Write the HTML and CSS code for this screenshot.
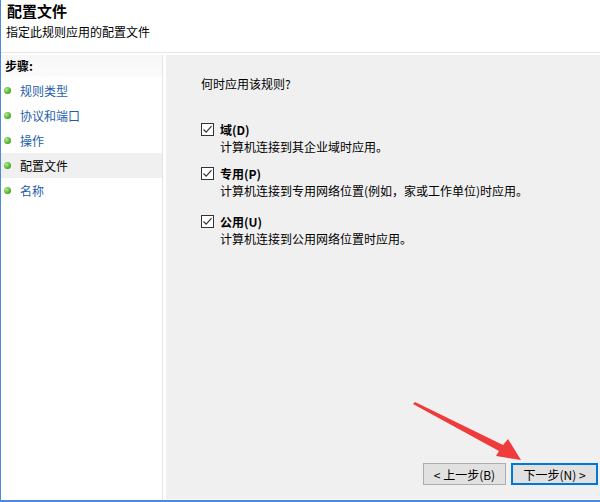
FILE: index.html
```html
<!DOCTYPE html>
<html lang="zh-CN">
<head>
  <meta charset="UTF-8" />
  <title>配置文件</title>
  <link rel="stylesheet" href="styles.css">
</head>
<body>
  <div class="window">
    <div class="header">
      <h1>配置文件</h1>
      <div class="subtitle">指定此规则应用的配置文件</div>
    </div>

    <div class="main">
      <div class="steps">
        <div class="steps-title">步骤:</div>
        <ul class="step-list">
          <li><span class="dot"></span><a>规则类型</a></li>
          <li><span class="dot"></span><a>协议和端口</a></li>
          <li><span class="dot"></span><a>操作</a></li>
          <li class="current"><span class="dot"></span><a>配置文件</a></li>
          <li><span class="dot"></span><a>名称</a></li>
        </ul>
      </div>

      <div class="content">
        <p class="question">何时应用该规则?</p>

        <div class="options">
          <div class="option">
            <span class="check"><svg width="13" height="13" viewBox="0 0 13 13"><rect x="0.5" y="0.5" width="12" height="12" fill="#fff" stroke="#333"/><path d="M2.5 6.5 L5.2 9.2 L10.5 3.2" fill="none" stroke="#333" stroke-width="1.2"/></svg></span>
            <div>
              <div class="opt-label">域(D)</div>
              <div class="opt-desc">计算机连接到其企业域时应用。</div>
            </div>
          </div>
          <div class="option">
            <span class="check"><svg width="13" height="13" viewBox="0 0 13 13"><rect x="0.5" y="0.5" width="12" height="12" fill="#fff" stroke="#333"/><path d="M2.5 6.5 L5.2 9.2 L10.5 3.2" fill="none" stroke="#333" stroke-width="1.2"/></svg></span>
            <div>
              <div class="opt-label">专用(P)</div>
              <div class="opt-desc">计算机连接到专用网络位置(例如，家或工作单位)时应用。</div>
            </div>
          </div>
          <div class="option option-last">
            <span class="check"><svg width="13" height="13" viewBox="0 0 13 13"><rect x="0.5" y="0.5" width="12" height="12" fill="#fff" stroke="#333"/><path d="M2.5 6.5 L5.2 9.2 L10.5 3.2" fill="none" stroke="#333" stroke-width="1.2"/></svg></span>
            <div>
              <div class="opt-label">公用(U)</div>
              <div class="opt-desc">计算机连接到公用网络位置时应用。</div>
            </div>
          </div>
        </div>

        <div class="buttons">
          <button class="btn">&lt; 上一步(B)</button>
          <button class="btn btn-default">下一步(N) &gt;</button>
        </div>
      </div>
    </div>

    <!-- red annotation arrow -->
    <svg class="arrow" width="600" height="502" viewBox="0 0 600 502">
      <polygon points="413,404 415,402 503,445 508,439 521,460 496,456 499,451" fill="#ef3b3b"/>
    </svg>
  </div>
</body>
</html>
```

FILE: styles.css
```css
* {
  margin: 0;
  padding: 0;
  box-sizing: border-box;
}

body {
  width: 600px;
  height: 502px;
  overflow: hidden;
  background: #fff;
  font-family: "Noto Sans CJK SC", "Liberation Sans", sans-serif;
  font-size: 12px;
  color: #000;
}

.window {
  position: relative;
  width: 600px;
  height: 502px;
  border-left: 1px solid #4d8ad9;
  border-bottom: 2px solid #4d8ad9;
  display: flex;
  flex-direction: column;
}

/* header */
.header {
  height: 53px;
  padding: 1px 0 0 5px;
  border-bottom: 1px solid #e6e6e6;
}

.header h1 {
  font-size: 15px;
  font-weight: bold;
  line-height: 20px;
  padding-left: 1px;
}

.subtitle {
  font-size: 12px;
  line-height: 16px;
  margin-top: 3px;
}

/* main area */
.main {
  flex: 1;
  display: flex;
  padding-top: 2px;
}

.steps {
  width: 162px;
  border-right: 1px solid #e4e4e4;
  margin-right: 3px;
}

.steps-title {
  height: 22px;
  line-height: 22px;
  padding-left: 4px;
  font-weight: bold;
  background: linear-gradient(#f7f7f7, #fbfbfb);
}

.step-list {
  list-style: none;
  padding-top: 1px;
}

.step-list li {
  height: 25px;
  display: flex;
  align-items: center;
  padding-left: 3px;
}

.step-list li.current {
  background: #f0f0f0;
}

.dot {
  width: 7px;
  height: 7px;
  border-radius: 50%;
  background: radial-gradient(circle at 35% 35%, #b6ec8c, #4eb22a 60%, #2f8a18);
  margin-right: 9px;
}

.step-list a {
  color: #1e5ea8;
  font-size: 12px;
}

.step-list li.current a {
  color: #000;
}

/* content */
.content {
  flex: 1;
  background: #f0f0f0;
  padding: 21px 0 0 35px;
  display: flex;
  flex-direction: column;
  border-bottom: 1px solid #fafafa;
}

.question {
  line-height: 16px;
}

.options {
  margin-top: 29px;
  display: flex;
  flex-direction: column;
  gap: 9px;
}

.option {
  display: flex;
  gap: 6px;
}

.option-last {
  margin-top: 4px;
}

.check {
  width: 13px;
  height: 13px;
  margin-top: 2px;
}

.check svg {
  display: block;
}

.opt-label {
  font-weight: bold;
  line-height: 17px;
}

.opt-desc {
  line-height: 18px;
}

.buttons {
  margin-top: auto;
  margin-bottom: 14px;
  margin-right: 2px;
  display: flex;
  justify-content: flex-end;
  gap: 5px;
}

.btn {
  height: 22px;
  width: 83px;
  font-family: "Noto Sans CJK SC", "Liberation Sans", sans-serif;
  font-size: 12px;
  background: #e1e1e1;
  border: 1px solid #adadad;
  color: #000;
}

.btn-default {
  width: 87px;
  border: 2px solid #0078d7;
}

.arrow {
  position: absolute;
  left: -1px;
  top: 0;
  pointer-events: none;
}
```
